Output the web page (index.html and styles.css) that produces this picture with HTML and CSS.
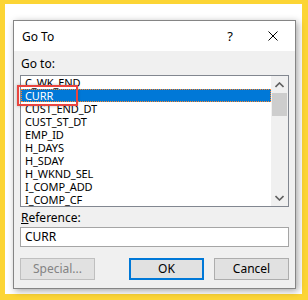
FILE: index.html
```html
<!DOCTYPE html>
<html>
<head>
<meta charset="utf-8">
<link rel="stylesheet" href="styles.css">
</head>
<body>
<div class="frame">
  <div class="dialog">
    <div class="titlebar">
      <span class="title">Go To</span>
      <span class="help">?</span>
      <span class="close">
        <svg width="10" height="10" viewBox="0 0 10 10"><path d="M0.5 0.5L9.5 9.5M9.5 0.5L0.5 9.5" stroke="#000" stroke-width="1" fill="none"/></svg>
      </span>
    </div>
    <div class="body">
      <div class="label">Go to:</div>
      <div class="listbox">
        <ul class="items">
          <li>C_WK_END</li>
          <li class="sel">CURR</li>
          <li>CUST_END_DT</li>
          <li>CUST_ST_DT</li>
          <li>EMP_ID</li>
          <li>H_DAYS</li>
          <li>H_SDAY</li>
          <li>H_WKND_SEL</li>
          <li>I_COMP_ADD</li>
          <li>I_COMP_CF</li>
        </ul>
        <div class="scrollbar">
          <div class="arrow"><svg width="9" height="6" viewBox="0 0 9 6"><path d="M0.5 5L4.5 1L8.5 5" stroke="#606060" stroke-width="1.6" fill="none"/></svg></div>
          <div class="track"><div class="thumb"></div></div>
          <div class="arrow"><svg width="9" height="6" viewBox="0 0 9 6"><path d="M0.5 1L4.5 5L8.5 1" stroke="#606060" stroke-width="1.6" fill="none"/></svg></div>
        </div>
      </div>
      <div class="label ref"><u>R</u>eference:</div>
      <div class="input">CURR</div>
      <div class="buttons">
        <div class="btn disabled">Special...</div>
        <div class="spacer"></div>
        <div class="btn default">OK</div>
        <div class="btn">Cancel</div>
      </div>
    </div>
  </div>
  <div class="annot"></div>
</div>
</body>
</html>
```

FILE: styles.css
```css
* { box-sizing: border-box; }
html, body { margin: 0; padding: 0; }
body {
  width: 308px;
  height: 300px;
  font-family: "Noto Sans", "Open Sans", sans-serif;
  font-size: 11.5px;
  color: #000;
}
.frame {
  position: relative;
  width: 308px;
  height: 300px;
  border-style: solid;
  border-color: #fcd535;
  border-width: 4px 6px 6px 5px;
  background: #fff;
  padding: 16px 0 0 8px;
}
.dialog {
  width: 283px;
  height: 269px;
  border: 1px solid #858585;
  background: #f0f0f0;
  box-shadow: 2px 2px 7px rgba(0,0,0,0.35);
  display: flex;
  flex-direction: column;
}
.titlebar {
  height: 30px;
  background: #fff;
  display: flex;
  align-items: center;
  padding-left: 8px;
}
.title { flex: 1; font-size: 12px; }
.help {
  width: 40px;
  text-align: center;
  font-size: 13px;
}
.close {
  width: 45px;
  display: flex;
  justify-content: center;
  align-items: center;
}
.close svg { display: block; }
.body {
  flex: 1;
  padding: 6px 6px 8px 6px;
  display: flex;
  flex-direction: column;
}
.label {
  height: 14px;
  line-height: 14px;
  padding-left: 1px;
  font-size: 12px;
}
.label u { text-decoration: underline; text-underline-offset: 1px; }
.listbox {
  margin-top: 4px;
  height: 132px;
  border: 1px solid #828790;
  background: #fff;
  display: flex;
}
.items {
  list-style: none;
  margin: 0;
  padding: 0;
  flex: 1;
  font-size: 11px;
  letter-spacing: -0.1px;
}
.items li {
  height: 13px;
  line-height: 13px;
  padding-left: 4px;
  white-space: nowrap;
}
.items li.sel {
  background: #0078d7;
  color: #fff;
  border: 1px dotted #ff8728;
  padding-left: 3px;
  line-height: 11px;
}
.scrollbar {
  width: 17px;
  background: #f0f0f0;
  display: flex;
  flex-direction: column;
}
.arrow {
  height: 17px;
  display: flex;
  align-items: center;
  justify-content: center;
}
.arrow svg { display: block; }
.track { flex: 1; }
.thumb {
  height: 23px;
  margin: 0 1px;
  background: #cdcdcd;
}
.ref { margin-top: 4px; }
.input {
  margin-top: 2px;
  height: 20px;
  border: 1px solid #a5a5a5;
  background: #fff;
  line-height: 18px;
  padding-left: 4px;
  font-size: 12px;
}
.buttons {
  margin-top: 11px;
  display: flex;
  gap: 10px;
}
.spacer { flex: 1; }
.btn {
  width: 75px;
  height: 22px;
  border: 1px solid #adadad;
  background: #e1e1e1;
  text-align: center;
  line-height: 20px;
  font-size: 12px;
}
.btn.default {
  border: 2px solid #0078d7;
  line-height: 18px;
}
.btn.disabled {
  color: #838383;
  border-color: #bfbfbf;
  background: #e1e1e1;
}
.annot {
  position: absolute;
  left: 12px;
  top: 81px;
  width: 61px;
  height: 21px;
  border: 2px solid #e8453f;
  box-shadow: 0 0 3px rgba(0,0,0,0.25);
  pointer-events: none;
}
```
